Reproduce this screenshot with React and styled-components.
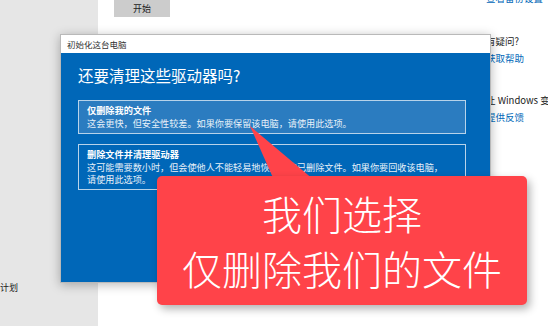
import React from "react";
import styled, { createGlobalStyle } from "styled-components";

const GlobalStyle = createGlobalStyle`
  html, body {
    margin: 0;
    padding: 0;
    background: #ffffff;
    font-family: "Noto Sans CJK SC", "Noto Sans", sans-serif;
  }
  #root {
    width: 548px;
    height: 326px;
    overflow: hidden;
  }
`;

const Page = styled.div`
  position: relative;
  display: flex;
  width: 548px;
  height: 326px;
  overflow: hidden;
`;

const Sidebar = styled.div`
  flex: 0 0 98px;
  background: #e6e6e6;
  display: flex;
  flex-direction: column;
  justify-content: flex-end;
  padding-bottom: 32px;
  box-sizing: border-box;
`;

const SideText = styled.span`
  font-size: 9px;
  color: #222;
  line-height: 12px;
`;

const Main = styled.div`
  flex: 1;
  display: flex;
  min-width: 0;
  background: #ffffff;
`;

const MainColumn = styled.div`
  flex: 0 0 388px;
  padding-left: 16px;
  box-sizing: border-box;
`;

const StartButton = styled.div`
  width: 56px;
  height: 17px;
  background: #cccccc;
  display: flex;
  align-items: center;
  justify-content: center;
  font-size: 9px;
  color: #222;
`;

const Aside = styled.div`
  display: flex;
  flex-direction: column;
  margin-top: -8px;
  white-space: nowrap;
`;

const Label = styled.span`
  font-size: 9.5px;
  line-height: 12px;
  color: #222;
  margin-top: ${(p) => p.$gap || 0}px;
`;

const Link = styled.span`
  font-size: 9.5px;
  line-height: 12px;
  color: #0067b8;
  margin-top: ${(p) => p.$gap || 0}px;
`;

const Dialog = styled.div`
  position: absolute;
  left: 60px;
  top: 34px;
  width: 431px;
  height: 249px;
  display: flex;
  flex-direction: column;
  box-shadow: 0 2px 10px rgba(0, 0, 0, 0.28);
  border: 1px solid #b9b9b9;
  box-sizing: border-box;
`;

const TitleBar = styled.div`
  height: 18px;
  background: #ffffff;
  display: flex;
  align-items: center;
  padding-left: 6px;
  font-size: 8.5px;
  color: #333;
`;

const Body = styled.div`
  flex: 1;
  background: #0067b8;
  padding: 11px 24px 0 17px;
  display: flex;
  flex-direction: column;
`;

const Heading = styled.h1`
  margin: 0 0 14px;
  font-weight: 400;
  font-size: 15.5px;
  line-height: 22px;
  color: #ffffff;
`;

const Option = styled.div`
  border: 1.5px solid #b7d3ea;
  background: ${(p) => (p.$active ? "#2b7cc0" : "transparent")};
  padding: 3px 8px 3px 8px;
  margin-bottom: 10px;
  color: #ffffff;
`;

const OptionTitle = styled.div`
  font-size: 9.2px;
  font-weight: 700;
  line-height: 13px;
`;

const OptionText = styled.div`
  font-size: 9.15px;
  line-height: 12.5px;
  color: #e8f1f9;
`;

const Callout = styled.div`
  position: absolute;
  left: 157px;
  top: 176px;
  width: 370px;
  height: 129px;
  background: #ff4349;
  border-radius: 5px;
  box-shadow: 3px 4px 9px rgba(0, 0, 0, 0.3);
  display: flex;
  flex-direction: column;
  align-items: center;
  justify-content: center;
  color: #ffffff;
  font-size: 40px;
  font-weight: 300;
  line-height: 55px;
  box-sizing: border-box;
`;

const Pointer = styled.svg`
  position: absolute;
  left: 0;
  top: 0;
  pointer-events: none;
`;

export default function App() {
  return (
    <>
      <GlobalStyle />
      <Page>
        <Sidebar>
          <SideText>计划</SideText>
        </Sidebar>
        <Main>
          <MainColumn>
            <StartButton>开始</StartButton>
          </MainColumn>
          <Aside>
            <Link>查看备份设置</Link>
            <Label $gap={31}>有疑问?</Label>
            <Link $gap={5}>获取帮助</Link>
            <Label $gap={30}>让 Windows 变得更好</Label>
            <Link $gap={5}>提供反馈</Link>
          </Aside>
        </Main>

        <Dialog>
          <TitleBar>初始化这台电脑</TitleBar>
          <Body>
            <Heading>还要清理这些驱动器吗?</Heading>
            <Option $active>
              <OptionTitle>仅删除我的文件</OptionTitle>
              <OptionText>
                这会更快，但安全性较差。如果你要保留该电脑，请使用此选项。
              </OptionText>
            </Option>
            <Option>
              <OptionTitle>删除文件并清理驱动器</OptionTitle>
              <OptionText>
                这可能需要数小时，但会使他人不能轻易地恢复你的已删除文件。如果你要回收该电脑，
                <br />
                请使用此选项。
              </OptionText>
            </Option>
          </Body>
        </Dialog>

        <Pointer width="548" height="326" viewBox="0 0 548 326">
          <polygon points="250,126 274,180 314,180" fill="#ff4349" />
        </Pointer>
        <Callout>
          <div>我们选择</div>
          <div>仅删除我们的文件</div>
        </Callout>
      </Page>
    </>
  );
}
